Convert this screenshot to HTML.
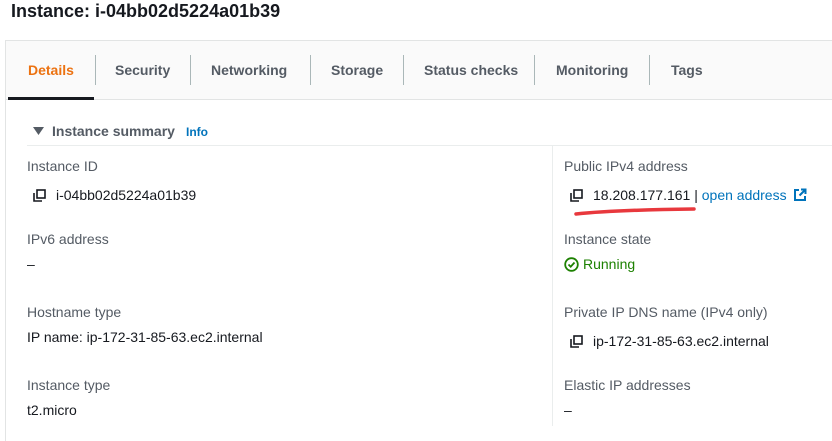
<!DOCTYPE html>
<html><head><meta charset="utf-8"><style>
body{margin:0;width:832px;height:422px;overflow:hidden;background:#fff;font-family:"Liberation Sans",sans-serif;position:relative;color:#16191f}
.a{position:absolute;white-space:nowrap}
.t{font-size:14px;font-weight:bold;color:#545b64;top:62px}
.sep{position:absolute;top:55px;width:1px;height:30px;background:#aab7b8}
.l{font-size:14px;color:#545b64}
.v{font-size:14px;color:#16191f}
.cp{position:absolute;width:13px;height:13px}
</style></head><body>
<div class="a" style="left:11px;top:1px;font-size:18px;font-weight:bold;">Instance: i-04bb02d5224a01b39</div>
<div class="a" style="left:5px;top:40px;width:840px;height:400px;border:1px solid #e2e4e4;border-right:none;border-bottom:none"></div>
<div class="a" style="left:6px;top:41px;width:830px;height:58px;background:#fafafa;border-bottom:1px solid #e2e4e4"></div>
<div class="a" style="left:8px;top:97px;width:86px;height:3px;background:#16191f"></div>
<div class="a t" style="left:28px;color:#ec7211">Details</div>
<div class="sep" style="left:95px"></div>
<div class="a t" style="left:115px">Security</div>
<div class="sep" style="left:190px"></div>
<div class="a t" style="left:211px">Networking</div>
<div class="sep" style="left:310px"></div>
<div class="a t" style="left:331px">Storage</div>
<div class="sep" style="left:403px"></div>
<div class="a t" style="left:424px">Status checks</div>
<div class="sep" style="left:534px"></div>
<div class="a t" style="left:556px">Monitoring</div>
<div class="sep" style="left:649px"></div>
<div class="a t" style="left:671px">Tags</div>
<svg class="a" style="left:33px;top:127px" width="11" height="9"><path d="M0 0H11L5.5 8Z" fill="#545b64"/></svg>
<div class="a" style="left:52px;top:123px;font-size:14px;font-weight:bold;color:#545b64">Instance summary</div>
<div class="a" style="left:186px;top:125px;font-size:12px;font-weight:bold;color:#0073bb">Info</div>
<div class="a" style="left:27px;top:145px;width:810px;height:1px;background:#eaeded"></div>
<div class="a" style="left:552px;top:146px;width:1px;height:280px;background:#eaeded"></div>

<div class="a l" style="left:27px;top:158px">Instance ID</div>
<svg class="cp" style="left:33px;top:189px" viewBox="0 0 13 13"><rect x="4" y="1" width="8" height="8" fill="none" stroke="#16191f" stroke-width="1.6"/><path d="M1 4V12H9" fill="none" stroke="#16191f" stroke-width="1.6"/></svg>
<div class="a v" style="left:56px;top:187px">i-04bb02d5224a01b39</div>
<div class="a l" style="left:27px;top:231px">IPv6 address</div>
<div class="a v" style="left:27px;top:256px">–</div>
<div class="a l" style="left:27px;top:304px">Hostname type</div>
<div class="a v" style="left:27px;top:329px">IP name: ip-172-31-85-63.ec2.internal</div>
<div class="a l" style="left:27px;top:377px">Instance type</div>
<div class="a v" style="left:27px;top:402px">t2.micro</div>

<div class="a l" style="left:564px;top:158px">Public IPv4 address</div>
<svg class="cp" style="left:570px;top:189px" viewBox="0 0 13 13"><rect x="4" y="1" width="8" height="8" fill="none" stroke="#16191f" stroke-width="1.6"/><path d="M1 4V12H9" fill="none" stroke="#16191f" stroke-width="1.6"/></svg>
<div class="a v" style="left:593px;top:187px">18.208.177.161 <span style="color:#16191f">|</span> <span style="color:#0073bb">open address</span></div>
<svg class="a" style="left:793px;top:188px" width="14" height="14" viewBox="0 0 14 14"><path d="M6 2H2V12H12V8" fill="none" stroke="#0073bb" stroke-width="2"/><path d="M8 1.5H12.5V6M12.5 1.5L6.5 7.5" fill="none" stroke="#0073bb" stroke-width="2"/></svg>
<svg class="a" style="left:574px;top:206px" width="124" height="10"><path d="M2 8 Q40 4 120 3" stroke="#e8383d" stroke-width="3.5" fill="none" stroke-linecap="round"/></svg>
<div class="a l" style="left:564px;top:231px">Instance state</div>
<svg class="a" style="left:564px;top:257px" width="15" height="15" viewBox="0 0 15 15"><circle cx="7.5" cy="7.5" r="6.3" fill="none" stroke="#1d8102" stroke-width="1.8"/><path d="M4.5 7.5L6.7 9.7L10.5 5.5" fill="none" stroke="#1d8102" stroke-width="1.8"/></svg>
<div class="a" style="left:583px;top:256px;font-size:14px;color:#1d8102">Running</div>
<div class="a l" style="left:564px;top:304px">Private IP DNS name (IPv4 only)</div>
<svg class="cp" style="left:570px;top:335px" viewBox="0 0 13 13"><rect x="4" y="1" width="8" height="8" fill="none" stroke="#16191f" stroke-width="1.6"/><path d="M1 4V12H9" fill="none" stroke="#16191f" stroke-width="1.6"/></svg>
<div class="a v" style="left:593px;top:333px">ip-172-31-85-63.ec2.internal</div>
<div class="a l" style="left:564px;top:377px">Elastic IP addresses</div>
<div class="a v" style="left:564px;top:402px">–</div>
</body></html>
